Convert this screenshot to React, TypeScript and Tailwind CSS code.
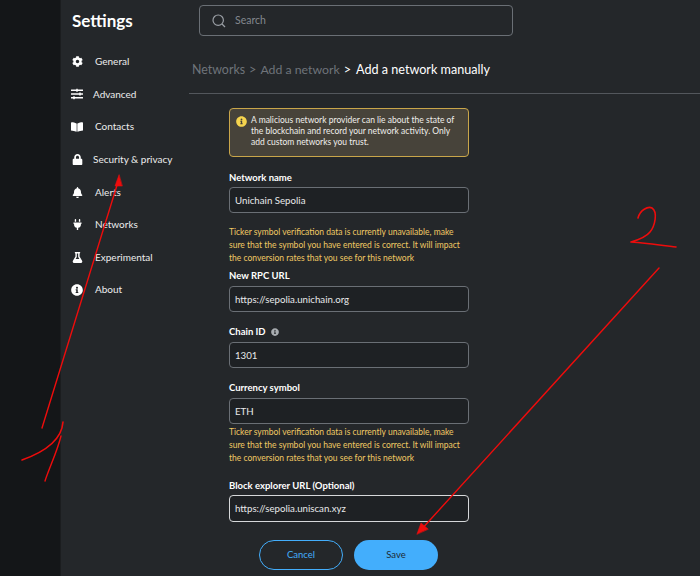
import React from "react";
import { FaCog, FaSlidersH, FaBookOpen, FaLock, FaBell, FaPlug, FaFlask, FaInfoCircle } from "react-icons/fa";

const nav = [
  { label: "General", Icon: FaCog, ml: "ml-[12px]", size: 11 },
  { label: "Advanced", Icon: FaSlidersH, ml: "ml-[10px]", size: 12 },
  { label: "Contacts", Icon: FaBookOpen, ml: "ml-[12px]", size: 12 },
  { label: "Security & privacy", Icon: FaLock, ml: "ml-[10px]", size: 11 },
  { label: "Alerts", Icon: FaBell, ml: "ml-[12px]", size: 11 },
  { label: "Networks", Icon: FaPlug, ml: "ml-[12px]", size: 11 },
  { label: "Experimental", Icon: FaFlask, ml: "ml-[12px]", size: 11 },
  { label: "About", Icon: FaInfoCircle, ml: "ml-[12px]", size: 12 },
];

function Warn() {
  return (
    <p className="text-[8.5px] leading-[13px] text-[#f0c964]">
      Ticker symbol verification data is currently unavailable, make sure that the symbol you have entered is correct. It will impact the conversion rates that you see for this network
    </p>
  );
}

function Field({ value, active, h = "h-[26px]" }: { value: string; active?: boolean; h?: string }) {
  return (
    <div className={`${h} w-[240px] rounded-[4px] border bg-[#1e2124] px-[5px] flex items-center text-[9.7px] text-[#e8e9ea] ${active ? "border-[#d6d8da]" : "border-[#6a6f75]"}`}>
      {value}
    </div>
  );
}

function Label({ children }: { children: React.ReactNode }) {
  return <div className="text-[9.5px] font-bold leading-[12px] text-white">{children}</div>;
}

export default function App() {
  return (
    <div className="relative flex h-[576px] w-[700px] overflow-hidden bg-[#24272a] font-['Lato','Liberation_Sans',sans-serif]">
      <div className="h-full w-[61px] shrink-0 border-r border-[#1b1d1f] bg-[#141618]" />

      <aside className="h-full w-[128px] shrink-0 pl-[11px]">
        <h1 className="mt-[12px] text-[17px] font-bold leading-[18px] text-white">Settings</h1>
        <ul className="mt-[15.5px]">
          {nav.map(({ label, Icon, ml, size }) => (
            <li key={label} className="flex h-[32.6px] items-center text-[10px] text-[#eceded]">
              <span className="-ml-[1px] flex w-[12px] justify-center text-white"><Icon size={size} /></span>
              <span className={ml}>{label}</span>
            </li>
          ))}
        </ul>
      </aside>

      <main className="flex h-full min-w-0 flex-1 flex-col">
        <div className="ml-[10px] mt-[5px] flex h-[31px] w-[314px] items-center rounded-[4px] border border-[#6a6f75] pl-[12px] text-[10.5px] text-[#83888e]">
          <svg width="14" height="14" viewBox="0 0 14 14" fill="none" stroke="#9a9fa5" strokeWidth="1.2">
            <circle cx="6.2" cy="6.2" r="5.2" />
            <path d="M10 10l3 3" />
          </svg>
          <span className="ml-[9px]">Search</span>
        </div>

        <div className="ml-[3px] mt-[25px] flex h-[18px] items-center whitespace-pre text-[12.6px] text-[#6f747a]">
          <span className="text-[12.4px]">Networks</span>
          <span className="mx-[4px]">&gt;</span>
          <span className="text-[12.3px]">Add a network</span>
          <span className="ml-[4px] mr-[5px] text-white">&gt;</span>
          <span className="text-white">Add a network manually</span>
        </div>

        <div className="mt-[14px] h-px bg-[#53575c]" />

        <div className="ml-[40px] mt-[14px] w-[240px]">
          <div className="flex h-[49px] w-[240px] gap-[4px] rounded-[4px] border border-[#c9a64a] bg-[#47433a] pl-[6px] pr-[10px] pt-[6px]">
            <FaInfoCircle size={11} className="mt-[1px] shrink-0 text-[#f5d44e]" />
            <p className="text-[8.5px] leading-[11px] text-[#f0efec]">
              A malicious network provider can lie about the state of the blockchain and record your network activity. Only add custom networks you trust.
            </p>
          </div>

          <div className="mt-[15px]"><Label>Network name</Label></div>
          <div className="mt-[3px]"><Field value="Unichain Sepolia" /></div>

          <div className="mt-[13px]"><Warn /></div>

          <div className="mt-[5px]"><Label>New RPC URL</Label></div>
          <div className="mt-[4px]"><Field value="https://sepolia.unichain.org" /></div>

          <div className="mt-[14px] flex items-center gap-[5px]">
            <Label>Chain ID</Label>
            <FaInfoCircle size={8} className="text-[#a9adb1]" />
          </div>
          <div className="mt-[4px]"><Field value="1301" /></div>

          <div className="mt-[14px]"><Label>Currency symbol</Label></div>
          <div className="mt-[4px]"><Field value="ETH" /></div>

          <div className="mt-[2px]"><Warn /></div>

          <div className="mt-[15px]"><Label>Block explorer URL (Optional)</Label></div>
          <div className="mt-[3px]"><Field value="https://sepolia.uniscan.xyz" active h="h-[27px]" /></div>

          <div className="ml-[30px] mt-[18px] flex gap-[11px] text-[9.5px]">
            <button className="h-[30px] w-[84px] rounded-full border border-[#43aefc] text-[#43aefc]">Cancel</button>
            <button className="h-[30px] w-[84px] rounded-full bg-[#43aefc] text-[#1e2a35]">Save</button>
          </div>
        </div>
      </main>

      <svg className="pointer-events-none absolute left-0 top-0" width="700" height="576" fill="none" stroke="#ee0c0c" strokeLinecap="round" strokeLinejoin="round">
        <path d="M42 428L118 182" strokeWidth="1.4" />
        <path d="M119 175L115 186L122 186Z" fill="#ee0c0c" strokeWidth="0.6" />
        <path d="M63 422C62 436 50 450 22 460" strokeWidth="1.6" />
        <path d="M61 436C57 452 50 466 45 481" strokeWidth="1.4" />
        <path d="M638 218C640 210 648 206 652 208C658 212 655 226 650 232C646 237 638 240 631 242C645 243 660 245 676 247" strokeWidth="1.6" />
        <path d="M659 268L420 531" strokeWidth="1.4" />
        <path d="M417 534L421 523L428 529Z" fill="#ee0c0c" strokeWidth="0.6" />
      </svg>
    </div>
  );
}
